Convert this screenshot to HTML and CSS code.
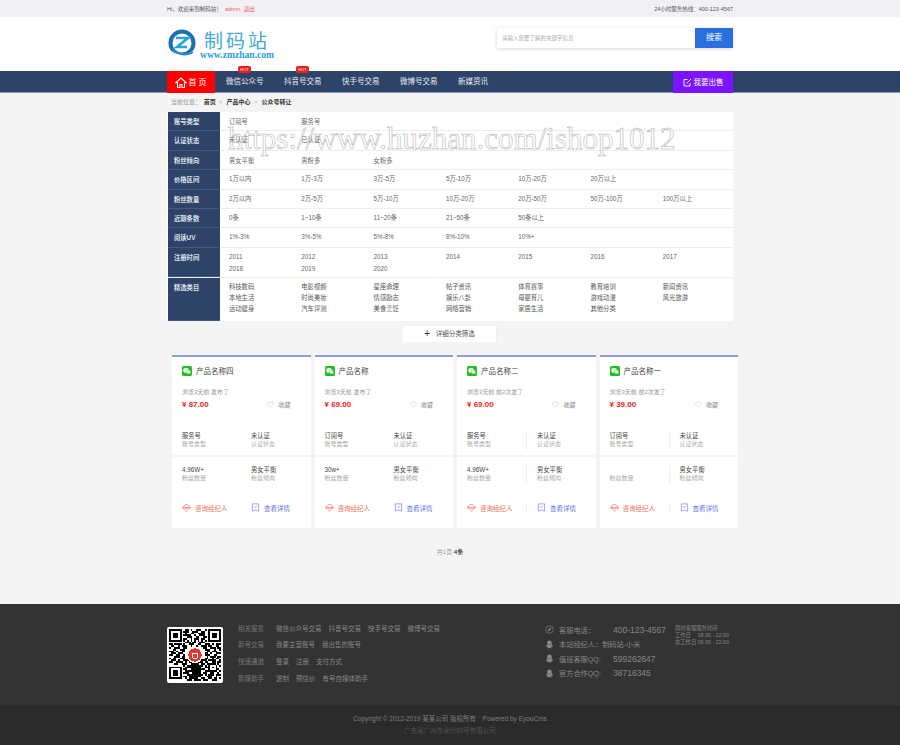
FILE: index.html
```html
<!DOCTYPE html>
<html>
<head>
  <title>公众号转让</title>
  <link rel="stylesheet" href="styles.css">
</head>
<body>
  <svg class="defs" width="0" height="0">
    <symbol id="ico-wx" viewBox="0 0 20 20">
      <rect width="20" height="20" rx="3" fill="#1fc01f"/>
      <ellipse cx="8" cy="8.5" rx="5.6" ry="4.6" fill="#fff"/>
      <path d="M5 12l-.6 2.4 2.6-1.4z" fill="#fff"/>
      <ellipse cx="13" cy="11.8" rx="4.5" ry="3.7" fill="#fff" stroke="#1fc01f" stroke-width=".8"/>
      <path d="M15 14.8l1.4 1.6-.1-2.4z" fill="#fff"/>
      <circle cx="6.2" cy="7.2" r=".8" fill="#1fc01f"/><circle cx="9.8" cy="7.2" r=".8" fill="#1fc01f"/>
      <circle cx="11.5" cy="11" r=".6" fill="#1fc01f"/><circle cx="14.5" cy="11" r=".6" fill="#1fc01f"/>
    </symbol>
    <symbol id="ico-heart" viewBox="0 0 16 16">
      <path d="M8 14L2.3 8.2a3.4 3.4 0 0 1 4.8-4.8l.9.9.9-.9a3.4 3.4 0 0 1 4.8 4.8z" fill="none" stroke="#f0a8a8" stroke-width="1.1"/>
    </symbol>
    <symbol id="ico-talk" viewBox="0 0 16 16">
      <path d="M3.500 10.500a2.500 2.500 0 0 1 .3-5 4.400 4.400 0 0 1 8.400 0 2.500 2.500 0 0 1 .3 5z" fill="none" stroke="#f0705a" stroke-width="1.2"/>
      <path d="M1.500 8h13M6 13l2 2 2-2" fill="none" stroke="#f0705a" stroke-width="1.2"/>
    </symbol>
    <symbol id="ico-doc" viewBox="0 0 16 16">
      <path d="M2.500 1.500h11v13l-5.500-2-5.500 2z" fill="none" stroke="#6f7ff0" stroke-width="1.200"/>
      <path d="M5.500 6l2 2 3-3" fill="none" stroke="#6f7ff0" stroke-width="1.200"/>
    </symbol>
    <symbol id="ico-qq" viewBox="0 0 16 16">
      <path d="M8 1C5.300 1 4 3 4 5.500v1.700L2.300 10.500c-.5 1.300-.2 2.200.6 1.600l1-.9c.3.800.7 1.400 1.300 1.900-.9.300-1.400.8-1.200 1.300.2.500 1.500.6 2.500.3.500-.2 1-.3 1.500-.3s1 .1 1.500.3c1 .3 2.300.2 2.500-.3.200-.5-.3-1-1.200-1.300.6-.5 1-1.100 1.300-1.900l1 .9c.8.600 1.100-.3.600-1.600L12 7.200V5.500C12 3 10.700 1 8 1z" fill="#8a8a8a"/>
      <path d="M4.500 7.500c2 1 5 1 7 0" fill="none" stroke="#333" stroke-width=".8"/>
    </symbol>
  </svg>

  <div class="topbar">
    <div class="wrap topbar-in">
      <div>Hi，欢迎来到制码站！ <a class="red">admin</a> <a class="red">退出</a></div>
      <div class="hotline">24小时服务热线：400-123-4567</div>
    </div>
  </div>

  <div class="header-bg">
    <div class="wrap header">
      <div class="logo">
        <svg class="logo-mark" width="30" height="30" viewBox="0 0 30 30">
          <circle cx="15" cy="14" r="11.500" fill="none" stroke="#1c6fb5" stroke-width="4"/>
          <path d="M9 9h12L10 18h10" fill="none" stroke="#2aa3dc" stroke-width="2.600"/>
          <path d="M4 22c6 4 14 5 22 0l2 6H6z" fill="#fff"/>
          <path d="M5 20c6 6 15 7 21 3" fill="none" stroke="#2a8ccb" stroke-width="2"/>
        </svg>
        <div class="logo-text">
          <div class="logo-cn">制码站</div>
          <div class="logo-en">www.zmzhan.com</div>
        </div>
      </div>
      <div class="search">
        <div class="search-input">请输入您要了解的关键字信息</div>
        <div class="search-btn">搜索</div>
      </div>
    </div>
  </div>

  <div class="nav">
    <div class="wrap nav-in">
      <a class="nav-home">
        <svg width="12" height="11" viewBox="0 0 12 11"><path d="M6 1L.8 5.800h1.700V10.500h2.500V7.500h2v3h2.500V5.800h1.700z" fill="none" stroke="#fff" stroke-width="1.100"/></svg>
        首 页
      </a>
      <a class="nav-item">微信公众号<span class="hot">HOT</span></a>
      <a class="nav-item">抖音号交易<span class="hot">HOT</span></a>
      <a class="nav-item">快手号交易</a>
      <a class="nav-item">微博号交易</a>
      <a class="nav-item">新媒资讯</a>
      <a class="nav-sell">
        <svg width="9" height="9" viewBox="0 0 9 9"><path d="M7 5v3H1V1.500h3.500M3.500 5.500L8 1" fill="none" stroke="#fff" stroke-width=".9"/></svg>
        我要出售
      </a>
    </div>
  </div>

  <div class="wrap crumbs">当前位置： <b>首页</b> <i>&gt;</i> <b>产品中心</b> <i>&gt;</i> <b>公众号转让</b></div>

  <div class="wrap filter">
    <div class="row r18"><div class="label">账号类型</div><div class="opts"><span>订阅号</span><span>服务号</span></div></div>
    <div class="row r21"><div class="label">认证状态</div><div class="opts"><span>未认证</span><span>已认证</span></div></div>
    <div class="row r18"><div class="label">粉丝倾向</div><div class="opts"><span>男女平衡</span><span>男粉多</span><span>女粉多</span></div></div>
    <div class="row r20"><div class="label">价格区间</div><div class="opts"><span>1万以内</span><span>1万-3万</span><span>3万-5万</span><span>5万-10万</span><span>10万-20万</span><span>20万以上</span></div></div>
    <div class="row r19"><div class="label">粉丝数量</div><div class="opts"><span>2万以内</span><span>2万-5万</span><span>5万-10万</span><span>10万-20万</span><span>20万-50万</span><span>50万-100万</span><span>100万以上</span></div></div>
    <div class="row r19"><div class="label">近期条数</div><div class="opts"><span>0条</span><span>1~10条</span><span>11~20条</span><span>21~50条</span><span>50条以上</span></div></div>
    <div class="row r20"><div class="label">阅读UV</div><div class="opts"><span>1%-3%</span><span>3%-5%</span><span>5%-8%</span><span>8%-10%</span><span>10%+</span></div></div>
    <div class="row r30"><div class="label">注册时间</div><div class="opts"><span>2011</span><span>2012</span><span>2013</span><span>2014</span><span>2015</span><span>2016</span><span>2017</span><span>2018</span><span>2019</span><span>2020</span></div></div>
    <div class="row r43"><div class="label">精选类目</div><div class="opts"><span>科技数码</span><span>电影视频</span><span>星座命理</span><span>帖子资讯</span><span>体育赛事</span><span>教育培训</span><span>新闻资讯</span><span>本地生活</span><span>时尚美妆</span><span>情感励志</span><span>娱乐八卦</span><span>母婴育儿</span><span>游戏动漫</span><span>风光旅游</span><span>运动健身</span><span>汽车评测</span><span>美食烹饪</span><span>网络营销</span><span>家居生活</span><span>其他分类</span></div></div>
  </div>

  <div class="expand-box"><a class="expand"><span class="plus">+</span> 详细分类筛选</a></div>

  <div class="wrap">
    <div class="cards">
      <div class="card">
        <div class="card-head"><svg class="wx"><use href="#ico-wx"/></svg>产品名称四</div>
        <div class="card-sub">浏览3天前 发布了</div>
        <div class="price-row"><span class="price">¥ 87.00</span><span class="fav"><svg class="fav-ico"><use href="#ico-heart"/></svg>收藏</span></div>
        <div class="stats first"><div><b>服务号</b><em>账号类型</em></div><div><b>未认证</b><em>认证状态</em></div></div>
        <div class="stats second"><div><b>4.96W+</b><em>粉丝数量</em></div><div><b>男女平衡</b><em>粉丝倾向</em></div></div>
        <div class="actions"><a class="talk"><svg class="act-ico"><use href="#ico-talk"/></svg>咨询经纪人</a><a class="more"><svg class="act-ico"><use href="#ico-doc"/></svg>查看详情</a></div>
      </div>
      <div class="card">
        <div class="card-head"><svg class="wx"><use href="#ico-wx"/></svg>产品名称</div>
        <div class="card-sub">浏览3天前 发布了</div>
        <div class="price-row"><span class="price">¥ 69.00</span><span class="fav"><svg class="fav-ico"><use href="#ico-heart"/></svg>收藏</span></div>
        <div class="stats first"><div><b>订阅号</b><em>账号类型</em></div><div><b>未认证</b><em>认证状态</em></div></div>
        <div class="stats second"><div><b>30w+</b><em>粉丝数量</em></div><div><b>男女平衡</b><em>粉丝倾向</em></div></div>
        <div class="actions"><a class="talk"><svg class="act-ico"><use href="#ico-talk"/></svg>咨询经纪人</a><a class="more"><svg class="act-ico"><use href="#ico-doc"/></svg>查看详情</a></div>
      </div>
      <div class="card ruled">
        <div class="card-head"><svg class="wx"><use href="#ico-wx"/></svg>产品名称二</div>
        <div class="card-sub">浏览3天前 前2次发了</div>
        <div class="price-row"><span class="price">¥ 69.00</span><span class="fav"><svg class="fav-ico"><use href="#ico-heart"/></svg>收藏</span></div>
        <div class="stats first"><div><b>服务号</b><em>账号类型</em></div><div><b>未认证</b><em>认证状态</em></div></div>
        <div class="stats second"><div><b>4.96W+</b><em>粉丝数量</em></div><div><b>男女平衡</b><em>粉丝倾向</em></div></div>
        <div class="actions"><a class="talk"><svg class="act-ico"><use href="#ico-talk"/></svg>咨询经纪人</a><a class="more"><svg class="act-ico"><use href="#ico-doc"/></svg>查看详情</a></div>
      </div>
      <div class="card ruled">
        <div class="card-head"><svg class="wx"><use href="#ico-wx"/></svg>产品名称一</div>
        <div class="card-sub">浏览3天前 前2次发了</div>
        <div class="price-row"><span class="price">¥ 39.00</span><span class="fav"><svg class="fav-ico"><use href="#ico-heart"/></svg>收藏</span></div>
        <div class="stats first"><div><b>订阅号</b><em>账号类型</em></div><div><b>未认证</b><em>认证状态</em></div></div>
        <div class="stats second"><div><b>&nbsp;</b><em>粉丝数量</em></div><div><b>男女平衡</b><em>粉丝倾向</em></div></div>
        <div class="actions"><a class="talk"><svg class="act-ico"><use href="#ico-talk"/></svg>咨询经纪人</a><a class="more"><svg class="act-ico"><use href="#ico-doc"/></svg>查看详情</a></div>
      </div>
    </div>
    <div class="pager">共1页 <b>4条</b></div>
  </div>

  <div class="foot">
    <div class="wrap foot-in">
      <div class="qr">
        <svg width="52" height="52" viewBox="0 0 29 29" shape-rendering="crispEdges">
          <path fill="none" stroke="#000" d="M0 .5h7M9 .5h2M12 .5h1M15 .5h3M20 .5h1M22 .5h7M0 1.500h1M6 1.500h1M8 1.500h3M13 1.500h3M18 1.500h2M22 1.500h1M28 1.500h1M0 2.500h1M2 2.500h3M6 2.500h1M9 2.500h1M12 2.500h2M16 2.500h4M22 2.500h1M24 2.500h3M28 2.500h1M0 3.500h1M2 3.500h3M6 3.500h1M8 3.500h4M14 3.500h1M17 3.500h3M22 3.500h1M24 3.500h3M28 3.500h1M0 4.500h1M2 4.500h3M6 4.500h1M10 4.500h3M15 4.500h2M19 4.500h2M22 4.500h1M24 4.500h3M28 4.500h1M0 5.500h1M6 5.500h1M8 5.500h2M12 5.500h1M14 5.500h3M18 5.500h2M22 5.500h1M28 5.500h1M0 6.500h7M8 6.500h1M10 6.500h1M12 6.500h1M14 6.500h1M16 6.500h1M18 6.500h1M20 6.500h1M22 6.500h7M9 7.500h3M13 7.500h2M17 7.500h3M0 8.500h2M3 8.500h4M8 8.500h1M11 8.500h3M16 8.500h2M20 8.500h3M24 8.500h1M26 8.500h3M1 9.500h2M5 9.500h1M7 9.500h3M12 9.500h1M15 9.500h1M18 9.500h3M22 9.500h2M26 9.500h2M0 10.500h1M3 10.500h3M8 10.500h2M19 10.500h2M23 10.500h3M27 10.500h2M2 11.500h2M6 11.500h3M20 11.500h3M25 11.500h1M28 11.500h1M0 12.500h3M4 12.500h1M7 12.500h2M21 12.500h2M24 12.500h3M1 13.500h3M5 13.500h3M20 13.500h2M23 13.500h1M26 13.500h3M0 14.500h2M4 14.500h2M8 14.500h1M20 14.500h3M25 14.500h2M3 15.500h3M7 15.500h2M21 15.500h1M23 15.500h3M27 15.500h2M0 16.500h1M2 16.500h2M6 16.500h3M20 16.500h2M24 16.500h1M26 16.500h2M1 17.500h3M5 17.500h1M8 17.500h4M18 17.500h3M22 17.500h4M28 17.500h1M0 18.500h2M4 18.500h4M9 18.500h1M11 18.500h3M15 18.500h4M20 18.500h2M24 18.500h2M27 18.500h2M3 19.500h2M7 19.500h3M12 19.500h5M18 19.500h2M21 19.500h5M27 19.500h1M8 20.500h1M10 20.500h9M20 20.500h1M22 20.500h1M26 20.500h1M28 20.500h1M0 21.500h7M9 21.500h9M20 21.500h3M24 21.500h1M26 21.500h1M0 22.500h1M6 22.500h1M8 22.500h2M12 22.500h8M22 22.500h1M26 22.500h2M0 23.500h1M2 23.500h3M6 23.500h1M9 23.500h9M20 23.500h7M28 23.500h1M0 24.500h1M2 24.500h3M6 24.500h1M8 24.500h3M13 24.500h5M19 24.500h2M23 24.500h2M27 24.500h1M0 25.500h1M2 25.500h3M6 25.500h1M10 25.500h9M20 25.500h1M22 25.500h3M26 25.500h3M0 26.500h1M6 26.500h1M8 26.500h2M11 26.500h7M21 26.500h3M26 26.500h1M0 27.500h7M9 27.500h1M11 27.500h5M18 27.500h2M22 27.500h2M25 27.500h2M28 27.500h1M10 28.500h3M14 28.500h4M19 28.500h3M24 28.500h3"/>
          <circle cx="14.500" cy="14.500" r="4.500" fill="#fff"/>
          <circle cx="14.500" cy="14.500" r="3.700" fill="#e8352b"/>
          <circle cx="14.500" cy="15" r="1.600" fill="none" stroke="#fff" stroke-width=".6"/>
        </svg>
      </div>
      <div class="foot-links">
        <div><span class="foot-h">相关服务</span><a>微信公众号交易</a><a>抖音号交易</a><a>快手号交易</a><a>微博号交易</a></div>
        <div><span class="foot-h">新号交易</span><a>我要主营账号</a><a>我出售的账号</a></div>
        <div><span class="foot-h">快速通道</span><a>登录</a><a>注册</a><a>支付方式</a></div>
        <div><span class="foot-h">新媒助手</span><a>进制</a><a>预估价</a><a>有号自媒体助手</a></div>
      </div>
      <div class="contact">
        <div class="contact-row">
          <svg class="c-ico" viewBox="0 0 16 16"><circle cx="8" cy="8" r="6.800" fill="none" stroke="#8a8a8a" stroke-width="1.100"/><path d="M5 11.500c3-.5 5.500-3.500 6-7l-2.500 1-.8 1.500-1.500 1-1 1.500z" fill="#8a8a8a"/></svg>
          <span class="c-label">客服电话：</span><span class="c-tel">400-123-4567</span>
        </div>
        <div class="contact-row"><svg class="c-ico"><use href="#ico-qq"/></svg><span>本站经纪人：制码站-小米</span></div>
        <div class="contact-row"><svg class="c-ico"><use href="#ico-qq"/></svg><span class="c-label">值班客服QQ:</span><span class="c-num">599262647</span></div>
        <div class="contact-row"><svg class="c-ico"><use href="#ico-qq"/></svg><span class="c-label">官方合作QQ:</span><span class="c-num">38716345</span></div>
      </div>
      <div class="hours">
        <div>周时客服服务时间</div>
        <div>工作日　 18:30 - 22:00</div>
        <div>非工作日 09:30 - 22:00</div>
      </div>
    </div>
  </div>
  <div class="foot-bottom">
    <div>Copyright © 2012-2019 某某公司 版权所有　Powered by EyouCms</div>
    <div class="icp">广东省广州市永兴50号有限公司</div>
  </div>

  <div class="watermark">https://www.huzhan.com/ishop1012</div>
</body>
</html>
```

FILE: styles.css
```css
* {
  box-sizing: border-box;
}

body {
  margin: 0;
  background-color: #f4f4f4;
  font-family: "Liberation Sans", "Noto Sans CJK SC", sans-serif;
  font-size: 6.5px;
  color: #666;
  position: relative;
}

.defs {
  position: absolute;
}

.wrap {
  width: 566px;
  margin: 0 auto;
}

.topbar {
  height: 17px;
  background-color: #f1f1f5;
  color: #555;
  font-size: 5.5px;
}

.topbar-in {
  height: 17px;
  display: flex;
  justify-content: space-between;
  align-items: center;
}

.red {
  color: #f25a5a;
  margin-left: 2px;
}

.header-bg {
  background-color: #fff;
}

.header {
  height: 54px;
  display: flex;
  justify-content: space-between;
  align-items: center;
}

.logo {
  display: flex;
  align-items: center;
  gap: 3px;
}

.logo-text {
  width: 75px;
}

.logo-cn {
  color: #3fa9d8;
  font-size: 19px;
  line-height: 21px;
  letter-spacing: 3px;
  padding-left: 4px;
  font-family: "Noto Sans CJK SC", sans-serif;
}

.logo-en {
  color: #2a9fdc;
  font-family: "Liberation Serif", serif;
  font-weight: bold;
  font-size: 9.600px;
  line-height: 10px;
  white-space: nowrap;
}

.search {
  width: 236px;
  height: 20px;
  display: flex;
  margin-top: -12px;
  background-color: #fff;
  box-shadow: 0 1px 4px rgba(0, 0, 0, 0.15);
}

.search-input {
  flex: 1;
  line-height: 20px;
  padding-left: 5px;
  color: #aaa;
  font-size: 5.500px;
}

.search-btn {
  width: 38px;
  background-color: #2a6fe0;
  color: #fff;
  font-size: 8px;
  line-height: 20px;
  text-align: center;
}

.nav {
  height: 22px;
  background-color: #2f4268;
  border-bottom: 1px solid #8c9ab5;
}

.nav-in {
  height: 22px;
  display: flex;
  color: #fff;
  font-size: 7.500px;
  line-height: 21px;
}

.nav-home {
  width: 48px;
  height: 22px;
  margin-right: 11px;
  background-color: #f00;
  display: flex;
  align-items: center;
  justify-content: center;
  gap: 1px;
  font-size: 8px;
}

.nav-item {
  width: 58px;
  position: relative;
  color: #e8ebf2;
}

.hot {
  position: absolute;
  left: 12px;
  top: -5px;
  width: 13px;
  height: 7px;
  border-radius: 2px;
  background-color: #e8201c;
  color: #fff;
  font-size: 4px;
  line-height: 7px;
  text-align: center;
}

.nav-sell {
  width: 60px;
  height: 22px;
  margin-left: auto;
  background-color: #7a14ff;
  display: flex;
  align-items: center;
  justify-content: center;
  gap: 2px;
}

.crumbs {
  height: 19px;
  line-height: 19px;
  padding-left: 4px;
  color: #999;
  font-size: 6px;
}

.crumbs b {
  color: #333;
  margin-left: 1px;
}

.crumbs i {
  font-style: normal;
  margin: 0 1.500px;
  color: #aaa;
}

.filter {
  background-color: #fff;
}

.row {
  display: flex;
  border-bottom: 1px solid #eee;
}

.r18 { height: 18.500px; }
.r19 { height: 19px; }
.r20 { height: 20px; }
.r21 { height: 20.500px; }
.r30 { height: 30px; }
.r43 { height: 43px; border-bottom: 0; }

.label {
  width: 52px;
  margin-left: 1px;
  padding: 6px 0 0 6px;
  background-color: #2f4268;
  border-bottom: 1px solid #45587d;
  color: #dde2ec;
  font-weight: bold;
  font-size: 6.300px;
  line-height: 8px;
  flex: none;
}

.r18 .label, .r19 .label, .r20 .label, .r21 .label {
  height: calc(100% + 1px);
}

.opts {
  flex: 1;
  display: flex;
  flex-wrap: wrap;
  align-content: flex-start;
  margin-right: -10px;
  padding: 5px 0 0 9px;
  color: #666;
  font-size: 6.300px;
  line-height: 8px;
}

.r18 .opts {
  padding-top: 5.500px;
}

.opts span {
  width: 72.300px;
  height: 8px;
  white-space: nowrap;
}

.r30 .opts {
  row-gap: 4px;
  padding-top: 5px;
}

.r43 .opts {
  row-gap: 3px;
  padding-top: 5.500px;
  color: #555;
}

.expand-box {
  display: flex;
  justify-content: center;
  padding: 5px 0 13px;
}

.expand {
  width: 94px;
  height: 16px;
  background-color: #fff;
  text-align: center;
  line-height: 16px;
  color: #555;
  border-right: 1px solid #eee;
}

.plus {
  color: #333;
  font-size: 10px;
  margin-right: 4px;
  vertical-align: -1px;
}

.cards {
  display: flex;
  gap: 4px;
  margin-left: 5px;
  margin-right: -5px;
}

.card {
  width: 138.500px;
  height: 173px;
  flex: none;
  background-color: #fff;
  border-top: 2px solid #8a9de0;
  padding: 0 10px;
}

.card-head {
  display: flex;
  align-items: center;
  gap: 4px;
  height: 10px;
  margin-top: 9px;
  color: #444;
  font-size: 7.500px;
}

.wx {
  width: 10px;
  height: 10px;
}

.card-sub {
  margin-top: 12px;
  height: 8px;
  line-height: 8px;
  color: #999;
  font-size: 6px;
}

.price-row {
  display: flex;
  justify-content: space-between;
  align-items: center;
  height: 12px;
  margin-top: 3px;
  padding-right: 10px;
}

.price {
  color: #ee1c25;
  font-weight: bold;
  font-size: 8px;
}

.fav {
  display: flex;
  align-items: center;
  gap: 4px;
  color: #888;
  font-size: 6px;
}

.fav-ico {
  width: 7px;
  height: 7px;
}

.stats {
  display: flex;
  margin: 0 -10px;
  padding: 0 10px;
}

.stats > div {
  width: 69px;
  height: 19px;
  flex: none;
}

.stats b {
  display: block;
  font-weight: normal;
  color: #444;
  font-size: 6.300px;
  line-height: 9.500px;
}

.stats em {
  display: block;
  font-style: normal;
  color: #aaa;
  font-size: 6px;
  line-height: 9.500px;
}

.stats.first {
  padding-top: 20px;
  height: 46px;
  border-bottom: 2px solid #f5f5f5;
}

.stats.second {
  padding-top: 8px;
  height: 36px;
}

.ruled .stats > div:first-child,
.ruled .actions .talk {
  border-right: 1px solid #eee;
  margin-right: 10px;
  width: 60px;
}

.actions {
  display: flex;
  margin-top: 10px;
  height: 10px;
}

.actions a {
  width: 69px;
  flex: none;
  display: flex;
  align-items: center;
  gap: 4px;
  font-size: 6.500px;
  white-space: nowrap;
}

.act-ico {
  width: 9px;
  height: 9px;
  flex: none;
}

.talk {
  color: #f0705a;
}

.more {
  color: #5f70ea;
}

.pager {
  padding-top: 19px;
  height: 76px;
  text-align: center;
  color: #999;
  font-size: 6px;
}

.pager b {
  color: #444;
}

.foot {
  height: 101px;
  background-color: #333;
  color: #888;
}

.foot-in {
  display: flex;
  padding-top: 23px;
}

.qr {
  width: 56px;
  height: 56px;
  padding: 2px;
  background-color: #fff;
  border-radius: 2px;
  flex: none;
}

.foot-links {
  width: 322px;
  margin-top: -2px;
  padding-left: 15px;
  font-size: 6.500px;
  line-height: 8px;
}

.foot-links > div {
  display: flex;
  gap: 7px;
  height: 16.700px;
}

.foot-h {
  width: 31px;
  color: #777;
}

.contact {
  width: 130px;
  margin-top: -4px;
  color: #868686;
  font-size: 7.200px;
}

.contact-row {
  display: flex;
  align-items: center;
  gap: 5px;
  height: 14.500px;
  white-space: nowrap;
}

.c-ico {
  width: 9px;
  height: 9px;
  flex: none;
}

.c-label {
  width: 49px;
}

.c-tel,
.c-num {
  font-size: 8.500px;
}

.hours {
  font-size: 5.300px;
  line-height: 7.400px;
  color: #868686;
  white-space: nowrap;
  margin-top: -2px;
}

.foot-bottom {
  height: 41px;
  padding-top: 10px;
  background-color: #2b2b2b;
  text-align: center;
  color: #7d7d7d;
  font-size: 6.500px;
  line-height: 8px;
}

.icp {
  margin-top: 4px;
  color: #4f4f4f;
}

.watermark {
  position: absolute;
  left: 228px;
  top: 121px;
  font-family: "Liberation Serif", serif;
  font-size: 31px;
  line-height: 36px;
  white-space: nowrap;
  color: transparent;
  -webkit-text-stroke: 0.5px #aaa;
}
```
